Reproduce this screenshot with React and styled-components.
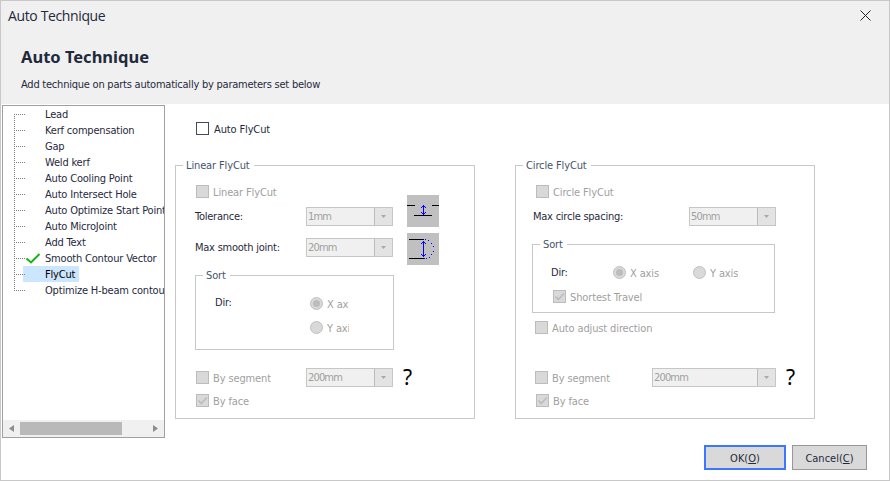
import React from 'react';
import styled, { createGlobalStyle } from 'styled-components';

const GlobalStyle = createGlobalStyle`
  * {
    box-sizing: border-box;
  }

  body {
    margin: 0;
    font-family: "DejaVu Sans Condensed", "DejaVu Sans", sans-serif;
    font-stretch: condensed;
    font-size: 11px;
    letter-spacing: -0.13px;
    color: #1f2a3c;
  }
`;

const Dialog = styled.div`
  display: flex;
  flex-direction: column;
  width: 890px;
  height: 481px;
  border: 1px solid #c8c8c8;
  background-color: #fff;
  overflow: hidden;
`;

const Header = styled.header`
  height: 103px;
  flex: none;
  background-color: #f0f0f0;
`;

const TitleBar = styled.div`
  display: flex;
  align-items: center;
  justify-content: space-between;
  height: 29px;
  padding: 0 18px 0 7px;
  font-family: "Open Sans", "Noto Sans", sans-serif;
  font-size: 14px;
  font-stretch: normal;
  letter-spacing: -0.37px;
`;

const Heading = styled.h1`
  margin: 16px 0 0 20px;
  font-family: "Noto Sans", sans-serif;
  font-size: 16.5px;
  line-height: 22px;
  font-weight: bold;
  letter-spacing: 0;
`;

const SubHeading = styled.p`
  margin: 9px 0 0 20px;
  line-height: 16px;
  letter-spacing: -0.23px;
`;

const Body = styled.div`
  display: flex;
  height: 334px;
  padding: 1px 0 0 1px;
`;

const TreePanel = styled.div`
  display: flex;
  flex-direction: column;
  justify-content: space-between;
  width: 163px;
  height: 333px;
  flex: none;
  border: 1px solid #a0a0a0;
  overflow: hidden;
`;

const Tree = styled.ul`
  margin: 0;
  padding: 0 0 0 11px;
  list-style: none;
  letter-spacing: -0.19px;
`;

const Branch = styled.svg`
  width: 31px;
  height: 16px;
  flex: none;
  margin-right: -11px;
  z-index: 1;
`;

const TreeItem = styled.li`
  display: flex;
  height: 16px;
  line-height: 18px;
  white-space: nowrap;
`;

const TreeLabel = styled.span`
  height: 16px;
  padding: 0 4px 0 ${props => (props.$selected ? 22 : 11)}px;
  margin-left: ${props => (props.$selected ? -11 : 0)}px;
  color: ${props => (props.$selected ? '#000' : 'inherit')};
  background-color: ${props => (props.$selected ? '#cce6ff' : 'transparent')};
`;

const ScrollBar = styled.div`
  display: flex;
  align-items: center;
  height: 17px;
  padding: 0 6px;
  background-color: #f0f0f0;
`;

const ScrollThumb = styled.div`
  width: 102px;
  height: 13px;
  margin: 0 31px 0 6px;
  background-color: #b9b9b9;
`;

const Content = styled.main`
  padding: 17px 0 0 10px;
`;

const Groups = styled.div`
  display: flex;
  gap: 40px;
  margin-top: 23px;
`;

const Group = styled.fieldset`
  width: ${props => props.$width}px;
  height: ${props => props.$height}px;
  min-width: 0;
  margin: ${props => props.$margin || 0};
  padding: 0;
  border: 1px solid #c8c8c8;
`;

const Legend = styled.legend`
  height: 15px;
  margin-left: 7px;
  padding: 0 4px 0 3px;
  line-height: 15px;
  color: #46546c;
`;

const Row = styled.div`
  display: flex;
  align-items: center;
  justify-content: ${props => (props.$spread ? 'space-between' : 'flex-start')};
  height: ${props => props.$height || 13}px;
  width: ${props => (props.$width ? `${props.$width}px` : 'auto')};
  margin-top: ${props => props.$top || 0}px;
  padding-left: ${props => props.$left || 0}px;
`;

const Columns = styled.div`
  display: flex;
`;

const Fields = styled.div`
  width: 217px;
  height: 92px;
`;

const Pictures = styled.div`
  display: flex;
  flex-direction: column;
  gap: 6px;
  padding: 22px 0 0 14px;
`;

const FieldLabel = styled.span`
  width: ${props => (props.$width ? `${props.$width}px` : 'auto')};
  white-space: nowrap;
  line-height: 15px;
  letter-spacing: -0.24px;
`;

const Option = styled.label`
  display: flex;
  align-items: center;
  gap: ${props => props.$gap || 4}px;
  height: 13px;
  color: ${props => (props.$enabled ? 'inherit' : '#a0a0a0')};
`;

const OptionText = styled.span`
  width: ${props => (props.$clip ? `${props.$clip}px` : 'auto')};
  height: 15px;
  line-height: 17px;
  overflow: hidden;
  white-space: nowrap;
`;

const Box = styled.span`
  display: flex;
  width: 13px;
  height: 13px;
  flex: none;
  border: 1px solid ${props => (props.$enabled ? '#3f4b5e' : '#bcbcbc')};
  background-color: ${props => (props.$enabled ? '#fff' : '#d9d9d9')};
`;

const Dot = styled.span`
  display: flex;
  align-items: center;
  justify-content: center;
  width: 13px;
  height: 13px;
  flex: none;
  border: 1px solid #bfbfbf;
  border-radius: 50%;
  background-color: #d9d9d9;

  &::after {
    content: '';
    width: 7px;
    height: 7px;
    border-radius: 50%;
    background-color: ${props => (props.$checked ? '#bcbcbc' : 'transparent')};
  }
`;

const SelectBox = styled.div`
  display: flex;
  width: ${props => props.$width || 87}px;
  height: 19px;
  border: 1px solid #c6c6c6;
  background-color: #f0f0f0;
  color: #a0a0a0;
`;

const SelectValue = styled.span`
  flex: 1;
  padding-left: 1px;
  line-height: 17px;
  letter-spacing: -0.85px;
`;

const SelectButton = styled.span`
  display: flex;
  align-items: center;
  justify-content: center;
  width: 18px;
  border-left: 1px solid #bcbcbc;
  background-color: #e3e3e3;
`;

const Help = styled.span`
  margin-left: 10px;
  font-family: "Noto Sans", sans-serif;
  font-size: 21px;
  line-height: 17px;
  color: #000;
`;

const DirRow = styled.div`
  display: flex;
  align-items: flex-start;
  padding: 12px 0 0 19px;
`;

const Radios = styled.div`
  display: flex;
  flex-direction: column;
  gap: 11px;
  padding-top: 2px;
`;

const Footer = styled.footer`
  display: flex;
  justify-content: flex-end;
  gap: 6px;
  padding: 7px 22px 0 0;
`;

const Button = styled.button`
  width: ${props => props.$width}px;
  height: 25px;
  padding: 1px 0 0;
  border: ${props => (props.$primary ? '2px solid #3c78ff' : '1px solid #989898')};
  background-color: #d9d9d9;
  color: inherit;
  font: inherit;
`;

const treeItems = [
  { name: 'Lead' },
  { name: 'Kerf compensation' },
  { name: 'Gap' },
  { name: 'Weld kerf' },
  { name: 'Auto Cooling Point' },
  { name: 'Auto Intersect Hole' },
  { name: 'Auto Optimize Start Point' },
  { name: 'Auto MicroJoint' },
  { name: 'Add Text' },
  { name: 'Smooth Contour Vector', checked: true },
  { name: 'FlyCut', selected: true },
  { name: 'Optimize H-beam contour' },
];

const TreeBranch = ({ first, last, checked }) => (
  <Branch viewBox="0 0 31 16" shapeRendering="crispEdges">
    <path
      d={`M0.5 ${first ? 8 : 0}V${last ? 9 : 16}`}
      stroke="#808080"
      strokeDasharray="1 1"
    />
    <path d="M0 8.5H11" stroke="#808080" strokeDasharray="1 1" />
    {checked && (
      <path
        d="M12.5 8.5L17 12.5L25.5 4"
        fill="none"
        stroke="#14b414"
        strokeWidth="2"
        shapeRendering="auto"
      />
    )}
  </Branch>
);

const Checkbox = ({ label, checked, enabled, gap }) => (
  <Option $enabled={enabled} $gap={gap}>
    <Box $enabled={enabled}>
      {checked && (
        <svg width="11" height="11" viewBox="0 0 11 11">
          <path d="M1.5 5.5L4.3 8.5L9.8 2.5" fill="none" stroke="#bcbcbc" strokeWidth="1.6" />
        </svg>
      )}
    </Box>
    <OptionText>{label}</OptionText>
  </Option>
);

const Radio = ({ label, checked, clip }) => (
  <Option>
    <Dot $checked={checked} />
    <OptionText $clip={clip}>{label}</OptionText>
  </Option>
);

const Select = ({ value, width }) => (
  <SelectBox $width={width}>
    <SelectValue>{value}</SelectValue>
    <SelectButton>
      <svg width="5" height="3" viewBox="0 0 5 3">
        <path d="M0 0H5L2.5 3Z" fill="#a8a8a8" />
      </svg>
    </SelectButton>
  </SelectBox>
);

const TolerancePicture = () => (
  <svg width="32" height="32" viewBox="0 0 32 32" shapeRendering="crispEdges">
    <rect width="32" height="32" fill="#c0c0c0" />
    <path d="M0 10.5H8M25 10.5H32M7 20.5H25" stroke="#000" />
    <path d="M16.5 10V20" stroke="#00f" />
    <path
      d="M15 11h1v1h-1zM17 11h1v1h-1zM14 12h1v1h-1zM18 12h1v1h-1zM14 17h1v1h-1zM18 17h1v1h-1zM15 18h1v1h-1zM17 18h1v1h-1z"
      fill="#00f"
    />
  </svg>
);

const SmoothJointPicture = () => (
  <svg width="32" height="32" viewBox="0 0 32 32" shapeRendering="crispEdges">
    <rect width="32" height="32" fill="#c0c0c0" />
    <path d="M2 6.5H17M2 25.5H17" stroke="#000" />
    <path d="M16.5 8V24" stroke="#00f" />
    <path
      d="M15 9h1v1h-1zM17 9h1v1h-1zM14 10h1v1h-1zM18 10h1v1h-1zM14 21h1v1h-1zM18 21h1v1h-1zM15 22h1v1h-1zM17 22h1v1h-1z"
      fill="#00f"
    />
    <path
      d="M18 6h1v1h-1zM21 7h1v1h-1zM24 10h1v1h-1zM26 13h1v1h-1zM26 18h1v1h-1zM24 21h1v1h-1zM22 24h1v1h-1zM19 25h1v1h-1zM17 25h1v1h-1z"
      fill="#00f"
    />
  </svg>
);

const LinearGroup = () => (
  <Group $width={300} $height={261}>
    <Legend>Linear FlyCut</Legend>
    <Columns>
      <Fields>
        <Row $top={12} $left={20}>
          <Checkbox label="Linear FlyCut" />
        </Row>
        <Row $top={9} $left={19} $height={19} $spread>
          <FieldLabel>Tolerance:</FieldLabel>
          <Select value="1mm" />
        </Row>
        <Row $top={12} $left={19} $height={19} $spread>
          <FieldLabel>Max smooth joint:</FieldLabel>
          <Select value="20mm" />
        </Row>
      </Fields>
      <Pictures>
        <TolerancePicture />
        <SmoothJointPicture />
      </Pictures>
    </Columns>
    <Group $width={199} $height={82} $margin="3px 0 0 19px">
      <Legend>Sort</Legend>
      <DirRow>
        <FieldLabel $width={95}>Dir:</FieldLabel>
        <Radios>
          <Radio label="X axis" clip={22} checked />
          <Radio label="Y axis" clip={22} />
        </Radios>
      </DirRow>
    </Group>
    <Row $top={18} $left={20} $height={19}>
      <Row $width={110}>
        <Checkbox label="By segment" />
      </Row>
      <Select value="200mm" />
      <Help>?</Help>
    </Row>
    <Row $top={7} $left={20}>
      <Checkbox label="By face" checked />
    </Row>
  </Group>
);

const CircleGroup = () => (
  <Group $width={300} $height={261}>
    <Legend>Circle FlyCut</Legend>
    <Row $top={12} $left={20}>
      <Checkbox label="Circle FlyCut" />
    </Row>
    <Row $top={9} $left={17} $width={260} $height={19} $spread>
      <FieldLabel>Max circle spacing:</FieldLabel>
      <Select value="50mm" />
    </Row>
    <Group $width={243} $height={76} $margin="11px 0 0 16px">
      <Legend>Sort</Legend>
      <Row $top={14} $left={18}>
        <Row $width={62} $height={15}>
          <FieldLabel>Dir:</FieldLabel>
        </Row>
        <Row $width={80}>
          <Radio label="X axis" checked />
        </Row>
        <Radio label="Y axis" />
      </Row>
      <Row $top={11} $left={20}>
        <Checkbox label="Shortest Travel" checked />
      </Row>
    </Group>
    <Row $top={8} $left={19}>
      <Checkbox label="Auto adjust direction" />
    </Row>
    <Row $top={34} $left={19} $height={19}>
      <Row $width={117}>
        <Checkbox label="By segment" />
      </Row>
      <Select value="200mm" width={124} />
      <Help>?</Help>
    </Row>
    <Row $top={7} $left={20}>
      <Checkbox label="By face" checked />
    </Row>
  </Group>
);

const App = () => (
  <>
    <GlobalStyle />
    <Dialog>
      <Header>
        <TitleBar>
          Auto Technique
          <svg width="11" height="11" viewBox="0 0 11 11">
            <path d="M0.5 0.5L10.5 10.5M10.5 0.5L0.5 10.5" stroke="#222" />
          </svg>
        </TitleBar>
        <Heading>Auto Technique</Heading>
        <SubHeading>Add technique on parts automatically by parameters set below</SubHeading>
      </Header>
      <Body>
        <TreePanel>
          <Tree>
            {treeItems.map((item, index) => (
              <TreeItem key={item.name}>
                <TreeBranch
                  first={index === 0}
                  last={index === treeItems.length - 1}
                  checked={item.checked}
                />
                <TreeLabel $selected={item.selected}>{item.name}</TreeLabel>
              </TreeItem>
            ))}
          </Tree>
          <ScrollBar>
            <svg width="5" height="7" viewBox="0 0 5 7">
              <path d="M5 0V7L0 3.5Z" fill="#8c8c8c" />
            </svg>
            <ScrollThumb />
            <svg width="5" height="7" viewBox="0 0 5 7">
              <path d="M0 0V7L5 3.5Z" fill="#8c8c8c" />
            </svg>
          </ScrollBar>
        </TreePanel>
        <Content>
          <Row $left={21}>
            <Checkbox label="Auto FlyCut" enabled gap={5} />
          </Row>
          <Groups>
            <LinearGroup />
            <CircleGroup />
          </Groups>
        </Content>
      </Body>
      <Footer>
        <Button $primary $width={82}>OK(<u>O</u>)</Button>
        <Button $width={75}>Cancel(<u>C</u>)</Button>
      </Footer>
    </Dialog>
  </>
);

export default App;
